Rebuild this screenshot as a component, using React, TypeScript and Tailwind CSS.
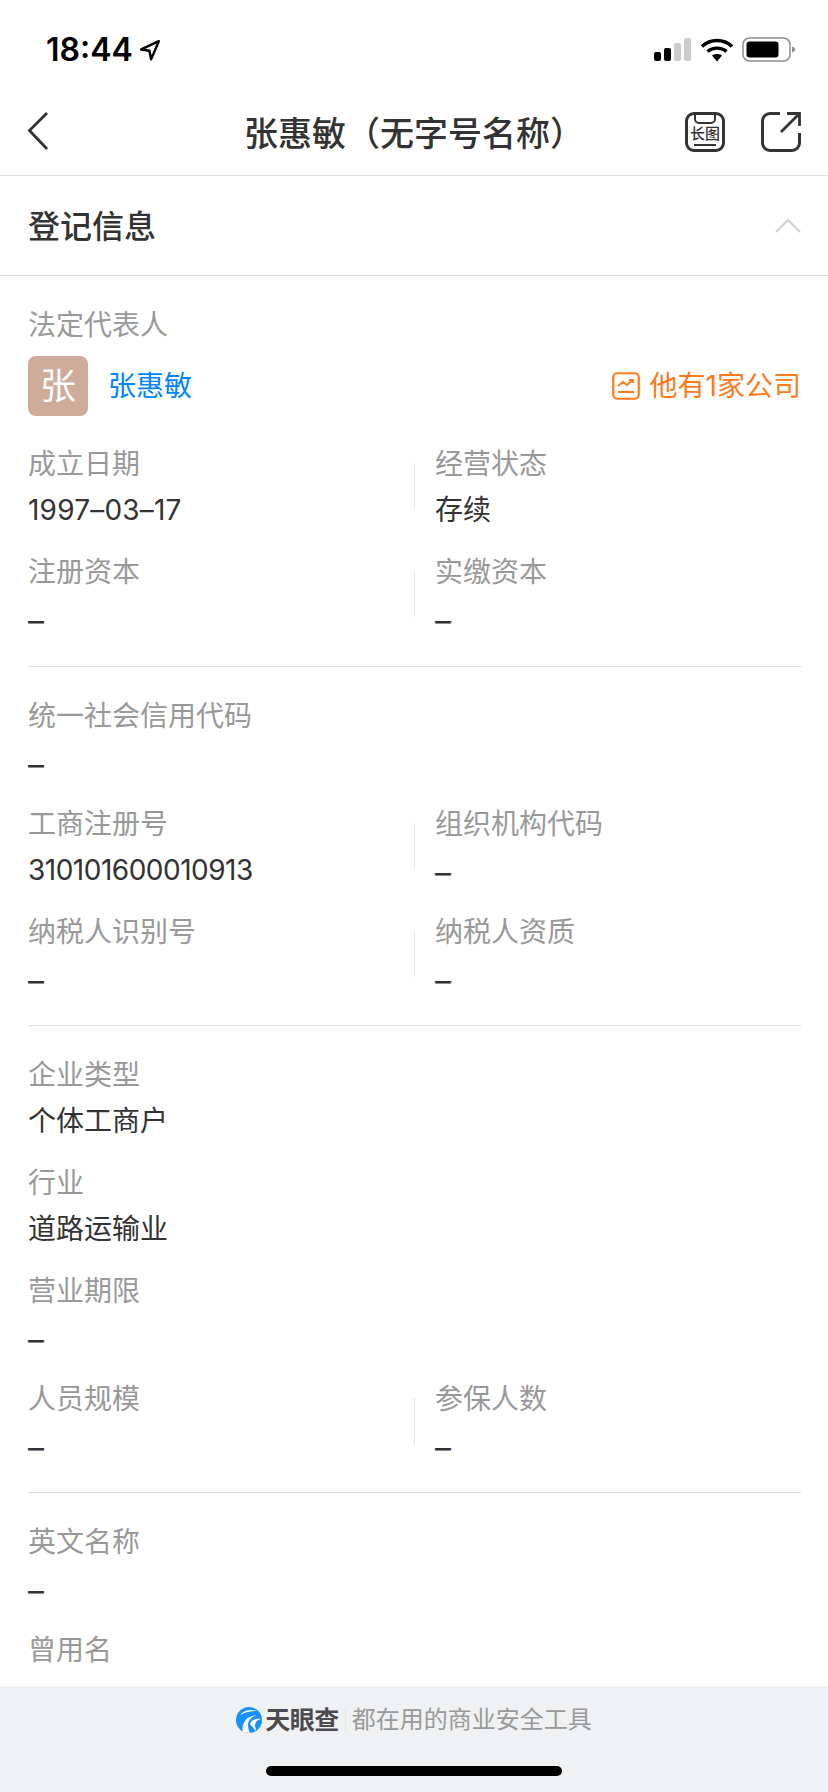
import React from 'react';

const cjk = "font-['Inter','Noto_Sans_CJK_SC',sans-serif]";

const Dash = () => <span className="relative top-[2px] text-[32px]">–</span>;

const Field: React.FC<{ label: string; value?: React.ReactNode }> = ({ label, value = <Dash /> }) => (
  <div className="flex h-[108px] flex-col">
    <div className="h-[46px] text-[28px] leading-[46px] text-[#999999]">{label}</div>
    <div className="h-[47px] text-[28px] leading-[47px] text-[#333333]">{value}</div>
  </div>
);

const Pair: React.FC<{ left: [string, React.ReactNode?]; right: [string, React.ReactNode?] }> = ({ left, right }) => (
  <div className="flex">
    <div className="w-[386px]">
      <Field label={left[0]} value={left[1]} />
    </div>
    <div className="mt-[22px] h-[46px] w-px bg-[#e5e5e5]" />
    <div className="pl-[20px]">
      <Field label={right[0]} value={right[1]} />
    </div>
  </div>
);

const StatusBar = () => (
  <div className="flex h-[98px] items-start justify-between pl-[46px] pr-[32px] pt-[30px]">
    <div className="flex items-center">
      <span className="text-[32px] font-semibold leading-[40px] text-black">18:44</span>
      <svg width="22" height="22" viewBox="0 0 20 20" className="ml-[6px]">
        <path d="M18 2 2 9.500l7.500 1.200L11 18.500z" fill="none" stroke="#000" strokeWidth="2.200" strokeLinejoin="round" />
      </svg>
    </div>
    <div className="flex items-center pt-[7px]">
      <svg width="38" height="24" viewBox="0 0 38 24">
        <rect x="0" y="14" width="7" height="9" rx="2" fill="#000" />
        <rect x="10" y="10" width="7" height="13" rx="2" fill="#000" />
        <rect x="20" y="5" width="7" height="18" rx="2" fill="#cccccc" />
        <rect x="30" y="0" width="7" height="23" rx="2" fill="#cccccc" />
      </svg>
      <svg width="32" height="24" viewBox="0 0 32 24" className="ml-[9px]">
        <path d="M1 8.500C9.500 .5 22.500 .5 31 8.500" fill="none" stroke="#000" strokeWidth="3.400" />
        <path d="M6.500 13.500c5.500-4.500 13.500-4.500 19 0" fill="none" stroke="#000" strokeWidth="3.400" />
        <path d="M11 17.500c3-2 7-2 10 0l-5 6z" fill="#000" />
      </svg>
      <svg width="54" height="26" viewBox="0 0 54 26" className="ml-[9px]">
        <rect x="1" y="1" width="47" height="23" rx="6.500" fill="none" stroke="#8e8e8e" strokeWidth="1.500" />
        <rect x="4.500" y="4.500" width="32" height="16" rx="3" fill="#000" />
        <path d="M50 9.500c2 .6 3 1.800 3 3s-1 2.400-3 3z" fill="#8e8e8e" />
      </svg>
    </div>
  </div>
);

const NavBar = () => (
  <div className="relative flex h-[78px] items-center justify-center border-b border-[#e0e0e0]">
    <svg width="24" height="40" viewBox="0 0 24 40" className="absolute left-[26px] top-[13px]">
      <path d="M21 2 3.500 19.500 21 38" fill="none" stroke="#333" strokeWidth="2.800" />
    </svg>
    <h1 className="mb-[6px] text-[34px] font-medium text-[#333333]">张惠敏（无字号名称）</h1>
    <div className="absolute right-[27px] top-[14px] flex items-center gap-[36px]">
      <div className="relative h-[40px] w-[40px] rounded-[9px] border-[3px] border-[#333333]">
        <div className="absolute left-[6px] top-[-3px] h-[12px] w-[22px] rounded-b-[5px] border-[2.500px] border-[#333333]" />
        <div className="absolute left-0 top-[10px] w-full whitespace-nowrap text-center text-[15px] font-medium leading-[18px] tracking-[0px] text-[#333333]">长图</div>
        <div className="absolute bottom-[3px] left-[6px] h-[2px] w-[22px] bg-[#333333]" />
      </div>
      <svg width="40" height="40" viewBox="0 0 40 40">
        <path d="M19 1.500H9a7.500 7.500 0 0 0-7.500 7.500v22A7.500 7.500 0 0 0 9 38.500h22a7.500 7.500 0 0 0 7.500-7.500V21" fill="none" stroke="#333" strokeWidth="3" />
        <path d="M20 20 38 2M26 1.500h12.500V14" fill="none" stroke="#333" strokeWidth="2.800" />
      </svg>
    </div>
  </div>
);

const Logo = () => (
  <svg width="26" height="26" viewBox="0 0 26 26" className="shrink-0">
    <circle cx="13" cy="13" r="13" fill="#1890ff" />
    <path d="M7 25C5 17 10 9 21 8c-6 2-9 6-9 10 0 3 1 6 2 8z" fill="#fff" />
    <path d="M14 17c1-4 5-6 11-5-4 1-6 3-6 6 0 2 1 4 1 6z" fill="#fff" />
    <path d="M4 8c4-5 11-6 17-4-6 0-12 1-17 4z" fill="#fff" />
  </svg>
);

export default function App() {
  return (
    <div className={`flex h-[1792px] w-[828px] flex-col overflow-hidden bg-white ${cjk}`}>
      <StatusBar />
      <NavBar />

      <div className="flex h-[100px] items-center justify-between border-b border-[#e0e0e0] pl-[28px] pr-[27px]">
        <h2 className="mt-[2px] text-[32px] font-medium text-[#333333]">登记信息</h2>
        <svg width="26" height="16" viewBox="0 0 26 16">
          <path d="M1 14 13 2l12 12" fill="none" stroke="#d4d4d4" strokeWidth="2.200" />
        </svg>
      </div>

      <div className="min-h-0 flex-1 overflow-hidden pl-[28px] pr-[27px]">
        <div className="pt-[26px]">
          <div className="h-[46px] text-[28px] leading-[46px] text-[#999999]">法定代表人</div>
          <div className="mt-[8px] flex h-[60px] items-center justify-between">
            <div className="flex items-center">
              <div className="flex h-[60px] w-[60px] items-center justify-center rounded-[8px] bg-[#cfac9a] text-[36px] text-white">张</div>
              <span className="ml-[20px] text-[28px] text-[#0084ff]">张惠敏</span>
            </div>
            <div className="flex items-center">
              <svg width="28" height="28" viewBox="0 0 28 28">
                <rect x="1.250" y="1.250" width="25.500" height="25.500" rx="4" fill="none" stroke="#ff7a1a" strokeWidth="2.200" />
                <path d="M6 14l5-4 4 3 6-5M17 8h4v3" fill="none" stroke="#ff7a1a" strokeWidth="1.800" />
                <path d="M6 20h16" stroke="#ff7a1a" strokeWidth="2" />
              </svg>
              <span className="ml-[10px] text-[28px] text-[#ff7a1a]">他有1家公司</span>
            </div>
          </div>
        </div>

        <div className="mt-[25px] pb-[9px]">
          <Pair left={['成立日期', <span className="tracking-[0.2px]">1997–03–17</span>]} right={['经营状态', '存续']} />
          <Pair left={['注册资本']} right={['实缴资本']} />
        </div>

        <div className="h-px bg-[#e0e0e0]" />

        <div className="pb-[8px] pt-[26px]">
          <Field label="统一社会信用代码" />
          <Pair left={['工商注册号', <span className="tracking-[-0.5px]">310101600010913</span>]} right={['组织机构代码']} />
          <Pair left={['纳税人识别号']} right={['纳税人资质']} />
        </div>

        <div className="h-px bg-[#e0e0e0]" />

        <div className="pb-[8px] pt-[26px]">
          <Field label="企业类型" value="个体工商户" />
          <Field label="行业" value="道路运输业" />
          <Field label="营业期限" />
          <Pair left={['人员规模']} right={['参保人数']} />
        </div>

        <div className="h-px bg-[#e0e0e0]" />

        <div className="pt-[26px]">
          <Field label="英文名称" />
          <div className="h-[46px] text-[28px] leading-[46px] text-[#999999]">曾用名</div>
        </div>
      </div>

      <div className="relative h-[106px] bg-[#f0f1f3]">
        <div className="flex items-center justify-center pt-[18px]">
          <Logo />
          <span className="ml-[3px] text-[25px] font-bold leading-[32px] tracking-[-0.5px] text-[#4a4a4f]">天眼查</span>
          <div className="ml-[6px] h-[22px] w-px bg-[#e5e5e5]" />
          <span className="ml-[6px] text-[24px] leading-[32px] text-[#999999]">都在用的商业安全工具</span>
        </div>
        <div className="absolute bottom-[16px] left-[266px] h-[10px] w-[296px] rounded-full bg-black" />
      </div>
    </div>
  );
}
